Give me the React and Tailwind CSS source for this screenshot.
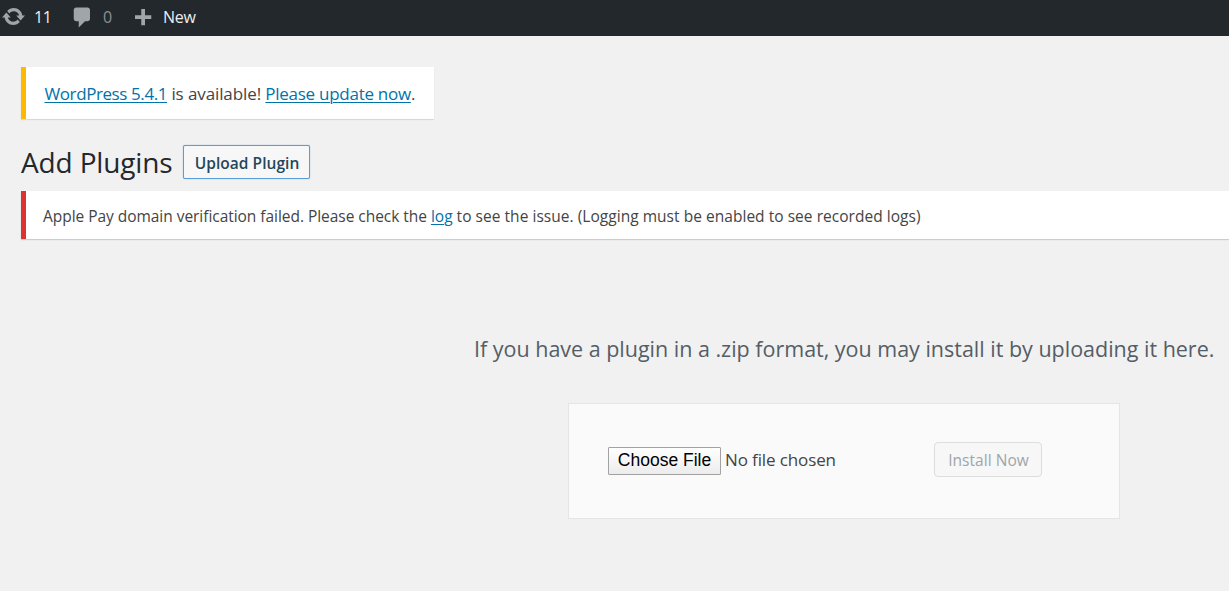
function AdminBar() {
  return (
    <header className="flex h-9 items-center bg-[#23282d] text-[16px] leading-[34px] text-[#eeeeee]">
      <div className="flex h-9 items-center pl-[1px]">
        <svg className="mt-[-3px] h-[25px] w-[25px] fill-[#a0a5aa]" viewBox="0 0 20 20">
          <path d="M10.2 3.28c3.53 0 6.43 2.61 6.92 6h2.08l-3.5 4-3.5-4h2.32c-.45-1.97-2.21-3.45-4.32-3.45-1.45 0-2.73.71-3.54 1.78L4.95 5.66C6.23 4.2 8.11 3.28 10.2 3.28zm-.4 13.44c-3.52 0-6.43-2.61-6.92-6H.8l3.5-4c1.17 1.33 2.33 2.67 3.5 4H5.48c.45 1.97 2.21 3.45 4.32 3.45 1.45 0 2.73-.71 3.54-1.78l1.71 1.95c-1.28 1.46-3.15 2.38-5.25 2.38z" />
        </svg>
        <span className="mt-[-2px] w-[36px] pl-[8px] tracking-[-0.4px]">11</span>
      </div>
      <div className="flex h-9 items-center pl-[8px]">
        <svg className="mt-[-1px] h-[25px] w-[25px] fill-[#a0a5aa]" viewBox="0 0 20 20">
          <path d="M5 2h9c1.1 0 2 .9 2 2v7c0 1.1-.9 2-2 2h-2l-5 5v-5H5c-1.1 0-2-.9-2-2V4c0-1.1.9-2 2-2z" />
        </svg>
        <span className="mt-[-2px] w-[35px] pl-[8px] text-[#8b8f93]">0</span>
      </div>
      <div className="flex h-9 items-center">
        <svg className="mt-[-4px] h-[25px] w-[25px] fill-[#a0a5aa]" viewBox="0 0 20 20">
          <path d="M17 9v3h-5v5H9v-5H4V9h5V4h3v5h5z" />
        </svg>
        <span className="mt-[-2px] pl-[8px] tracking-[-0.3px]">New</span>
      </div>
    </header>
  );
}

function Link({ children, className = "" }) {
  return (
    <a href="#" className={"text-[#0073aa] underline decoration-1 underline-offset-2 " + className}>
      {children}
    </a>
  );
}

export default function App() {
  return (
    <div className="h-[591px] overflow-hidden bg-[#f1f1f1] font-['Open_Sans','Noto_Sans',sans-serif] whitespace-nowrap text-[#444444]">
      <AdminBar />
      <main className="pt-[31px] pl-[21px]">
        <div className="h-[52px] w-[413px] border-l-[5px] border-[#ffb900] bg-white pl-[18.5px] text-[17px] leading-[53px] shadow-[0_1px_1px_rgba(0,0,0,0.1)]">
          <Link className="tracking-[-0.41px]">WordPress 5.4.1</Link>
          <span className="tracking-[-0.1px]"> is available! </span>
          <Link className="tracking-[-0.27px]">Please update now</Link>.
        </div>

        <div className="mt-[26px] flex h-[34px] items-center">
          <h1 className="w-[162px] text-[28px] leading-[34px] font-normal tracking-[-0.15px] text-[#23282d]">Add Plugins</h1>
          <button className="h-[34px] w-[127px] rounded-[2px] border border-[#5b9dd9] bg-[#f7f7f7] pl-[1px] text-[15.5px] leading-[34px] font-semibold tracking-[0.05px] text-[#23475b] shadow-[0_0_1px_#5b9dd9]">
            Upload Plugin
          </button>
        </div>

        <div className="mt-[12px] h-[48px] border-l-[5px] border-[#dc3232] bg-white pl-[17px] text-[15.5px] leading-[51px] shadow-[0_1px_1px_rgba(0,0,0,0.15)]">
          <span className="tracking-[-0.04px]">Apple Pay domain verification failed. Please check the </span>
          <Link>log</Link>
          <span className="tracking-[0.035px]"> to see the issue. (Logging must be enabled to see recorded logs)</span>
        </div>

        <section className="mt-[94px] ml-[453px]">
          <p className="text-[21.5px] leading-[32px] font-normal tracking-[-0.01px] text-[#555d66]">
            If you have a plugin in a .zip format, you may install it by uploading it here.
          </p>
          <form className="mt-[38px] ml-[94px] flex h-[116px] w-[552px] items-center border border-[#e5e5e5] bg-[#fafafa] pl-[39px]">
            <button
              type="button"
              className="h-[28px] w-[113px] rounded-[1px] border border-[#a2a2a2] bg-linear-to-b from-white to-[#ececec] pb-[2px] font-['Liberation_Sans',Arial,sans-serif] text-[17.5px] leading-[24px] text-black"
            >
              Choose File
            </button>
            <span className="mt-[-2px] w-[213px] pl-[4px] text-[17px] tracking-[-0.12px]">No file chosen</span>
            <button
              type="button"
              disabled
              className="mt-[-3px] h-[35px] w-[108px] rounded-[4px] border border-[#dddddd] bg-[#f7f7f7] pl-[1px] text-[15.5px] leading-[34px] tracking-[0.04px] text-[#a0a5aa]"
            >
              Install Now
            </button>
          </form>
        </section>
      </main>
    </div>
  );
}
